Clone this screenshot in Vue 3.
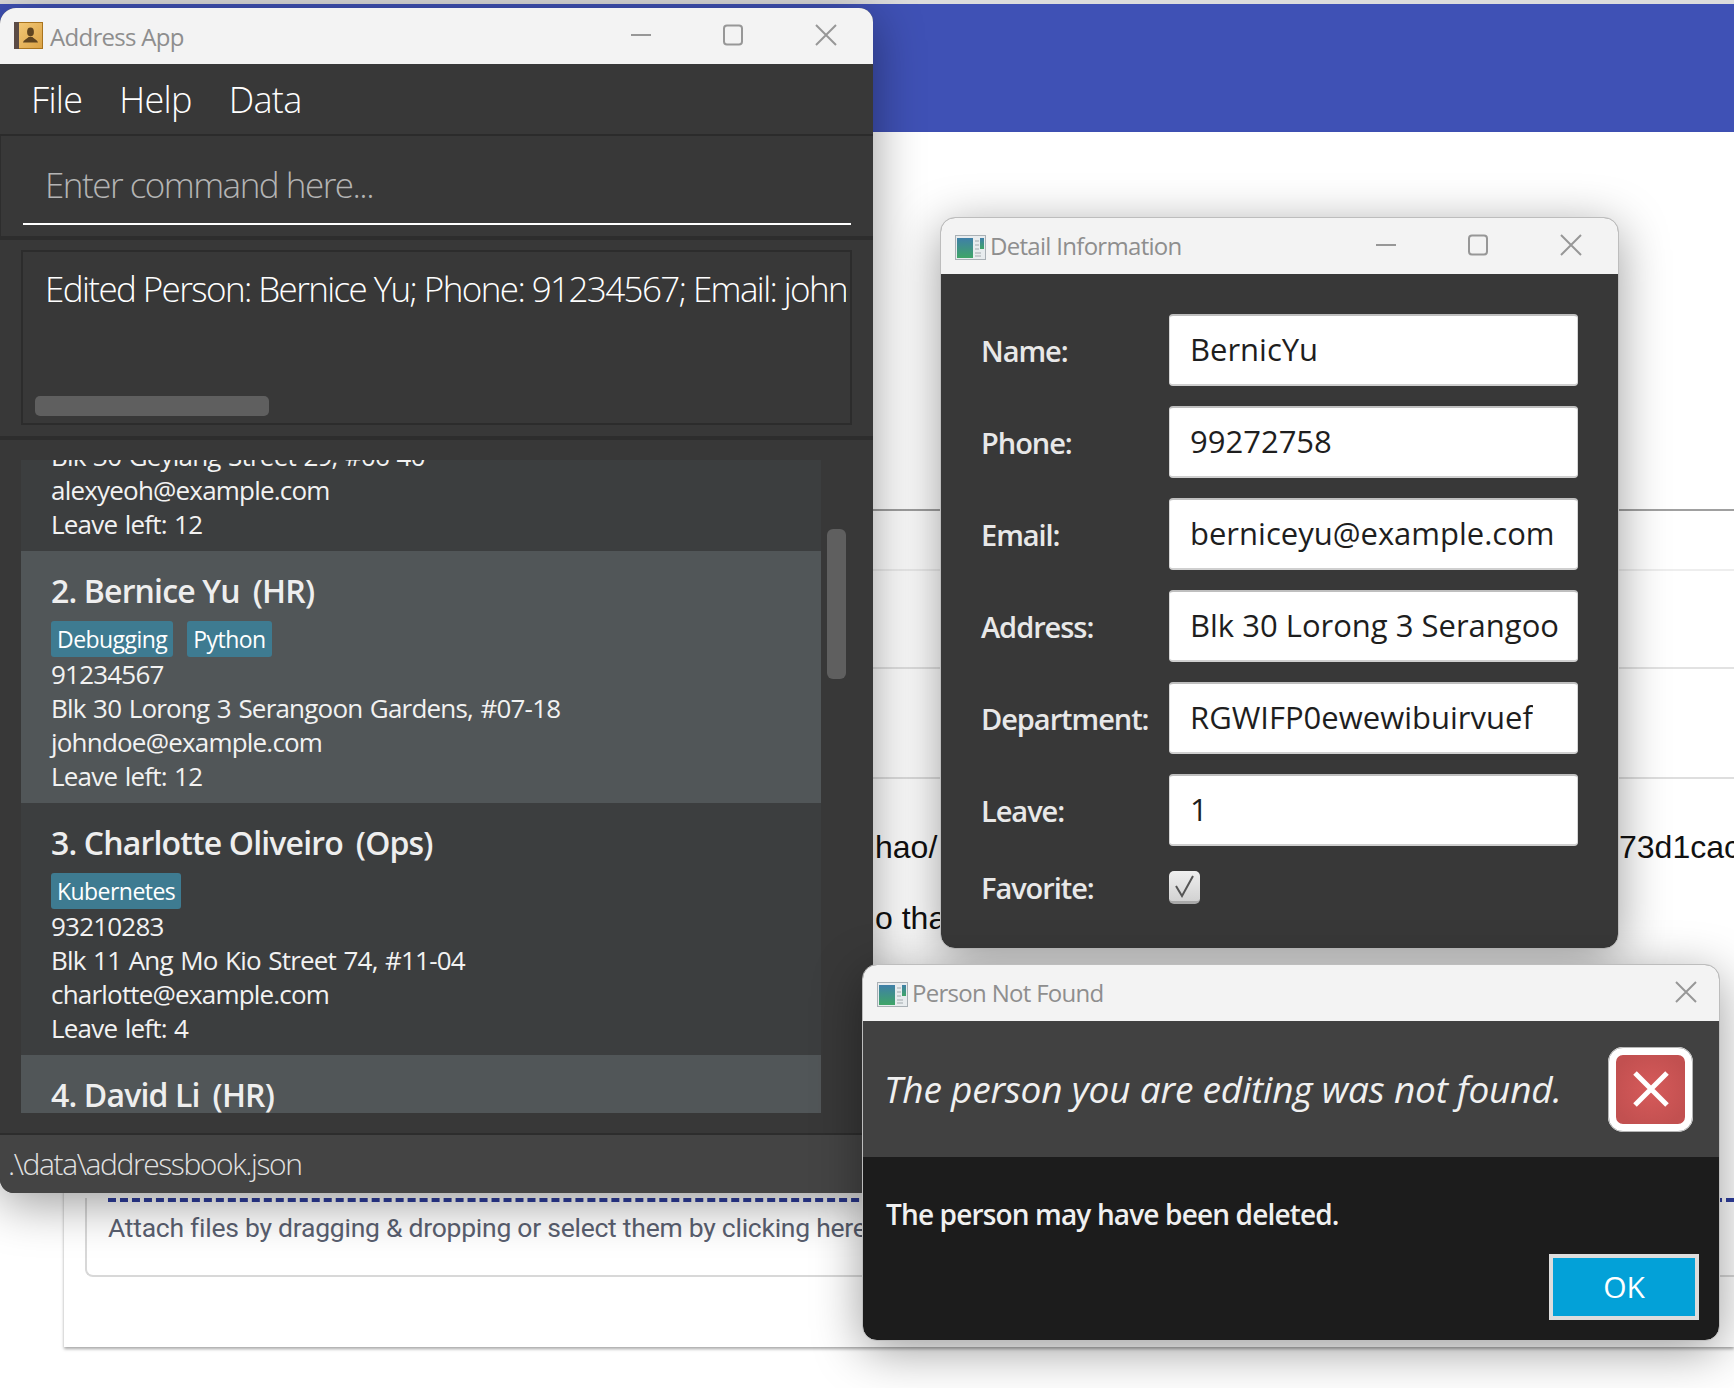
<script setup>
const persons = [
  { id: 1, name: 'Alex Yeoh', dept: 'Ops', tags: ['Java'], phone: '87438807', address: 'Blk 30 Geylang Street 29, #06-40', email: 'alexyeoh@example.com', leave: 12 },
  { id: 2, name: 'Bernice Yu', dept: 'HR', tags: ['Debugging', 'Python'], phone: '91234567', address: 'Blk 30 Lorong 3 Serangoon Gardens, #07-18', email: 'johndoe@example.com', leave: 12 },
  { id: 3, name: 'Charlotte Oliveiro', dept: 'Ops', tags: ['Kubernetes'], phone: '93210283', address: 'Blk 11 Ang Mo Kio Street 74, #11-04', email: 'charlotte@example.com', leave: 4 },
  { id: 4, name: 'David Li', dept: 'HR', tags: ['Docker'], phone: '91031282', address: 'Blk 436 Serangoon Gardens Street 26, #16-43', email: 'lidavid@example.com', leave: 9 }
]

const fields = [
  { label: 'Name:', value: 'BernicYu' },
  { label: 'Phone:', value: '99272758' },
  { label: 'Email:', value: 'berniceyu@example.com' },
  { label: 'Address:', value: 'Blk 30 Lorong 3 Serangoon Gardens, #07-18' },
  { label: 'Department:', value: 'RGWIFP0ewewibuirvuef' },
  { label: 'Leave:', value: '1' }
]
</script>

<template>
  <div class="desktop">
    <!-- browser page behind the windows -->
    <div class="page">
      <div class="page-top"></div>
      <div class="page-header"></div>
      <div class="card">
        <div class="rule rule-a"></div>
        <div class="rule rule-b"></div>
        <div class="rule rule-c"></div>
        <div class="rule rule-d"></div>
        <div class="text-line first">
          <span>hao/</span>
          <span class="tail">73d1cac1f2</span>
        </div>
        <div class="text-line second"><span>o tha</span></div>
        <div class="attach">
          <div class="attach-dash"></div>
          <div class="attach-text">Attach files by dragging &amp; dropping or select them by clicking here</div>
        </div>
      </div>
    </div>

    <!-- main window -->
    <section class="win main-win">
      <header class="bar">
        <svg class="book" width="29" height="27" viewBox="0 0 29 27">
          <defs>
            <linearGradient id="cover" x1="0" y1="0" x2="1" y2="1">
              <stop offset="0" stop-color="#f2c877" />
              <stop offset="1" stop-color="#dba244" />
            </linearGradient>
          </defs>
          <rect x="4" y="0.5" width="24.5" height="26" fill="url(#cover)" stroke="#a9741e" />
          <rect x="0" y="0" width="5" height="27" fill="#5b4b45" />
          <ellipse cx="16.5" cy="10" rx="3.4" ry="4.4" fill="#5f4420" />
          <path d="M9 20.5c.5-2.500 4-3.500 5.500-5.500h4c1.500 2 5 3 5.500 5.500z" fill="#5f4420" />
        </svg>
        <span class="bar-title">Address App</span>
        <div class="controls">
          <button class="ctl"><svg width="22" height="22" viewBox="0 0 22 22"><path d="M1 11h20" /></svg></button>
          <button class="ctl"><svg width="22" height="22" viewBox="0 0 22 22"><rect x="2" y="1.500" width="18" height="19" rx="3" /></svg></button>
          <button class="ctl ctl-close"><svg width="22" height="22" viewBox="0 0 22 22"><path d="M1 1l20 20M21 1L1 21" /></svg></button>
        </div>
      </header>

      <nav class="menu">
        <span>File</span>
        <span>Help</span>
        <span>Data</span>
      </nav>

      <div class="command-pane">
        <div class="command">Enter command here...</div>
      </div>

      <div class="result-pane">
        <div class="result">
          <div class="result-text">Edited Person: Bernice Yu; Phone: 91234567; Email: johndoe@example.com; Address: Blk 30 Lorong 3</div>
          <div class="hscroll"></div>
        </div>
      </div>

      <div class="list-pane">
        <div class="list">
          <div class="list-inner">
            <article v-for="p in persons" :key="p.id" class="person" :class="{ alt: p.id % 2 === 0 }">
              <h3 class="person-name"><span>{{ p.id }}. {{ p.name }}</span><span>({{ p.dept }})</span></h3>
              <div class="tags">
                <span v-for="t in p.tags" :key="t" class="tag">{{ t }}</span>
              </div>
              <div class="line">{{ p.phone }}</div>
              <div class="line">{{ p.address }}</div>
              <div class="line">{{ p.email }}</div>
              <div class="line">Leave left: {{ p.leave }}</div>
            </article>
          </div>
        </div>
        <div class="vscroll"></div>
      </div>

      <footer class="status">.\data\addressbook.json</footer>
    </section>

    <!-- detail window -->
    <section class="win detail-win">
      <header class="bar">
        <svg class="app-icon" width="31" height="25" viewBox="0 0 31 25">
          <defs>
            <linearGradient id="pane" x1="0" y1="0" x2="0" y2="1">
              <stop offset="0" stop-color="#3f7fa8" />
              <stop offset="1" stop-color="#3fa567" />
            </linearGradient>
          </defs>
          <rect x="0.500" y="0.500" width="30" height="24" fill="#e8ecee" stroke="#a9b0b5" />
          <rect x="2" y="3" width="16" height="20" fill="url(#pane)" />
          <path d="M20 6h4M20 10h4M20 14h4M20 18h6M20 21h6" stroke="#b9c0c4" stroke-width="1.500" />
          <rect x="25" y="3" width="4" height="11" fill="url(#pane)" />
        </svg>
        <span class="bar-title">Detail Information</span>
        <div class="controls">
          <button class="ctl"><svg width="22" height="22" viewBox="0 0 22 22"><path d="M1 11h20" /></svg></button>
          <button class="ctl"><svg width="22" height="22" viewBox="0 0 22 22"><rect x="2" y="1.500" width="18" height="19" rx="3" /></svg></button>
          <button class="ctl ctl-close"><svg width="22" height="22" viewBox="0 0 22 22"><path d="M1 1l20 20M21 1L1 21" /></svg></button>
        </div>
      </header>

      <form class="form" @submit.prevent>
        <template v-for="f in fields" :key="f.label">
          <label class="form-label">{{ f.label }}</label>
          <div class="field"><span class="field-text">{{ f.value }}</span></div>
        </template>
        <label class="form-label fav-label">Favorite:</label>
        <div class="fav">
          <div class="check">
            <svg width="23" height="27" viewBox="0 0 23 27"><path d="M3 13l6 10L20 3" /></svg>
          </div>
        </div>
      </form>
    </section>

    <!-- alert -->
    <section class="win alert-win">
      <header class="bar">
        <svg class="app-icon" width="31" height="25" viewBox="0 0 31 25">
          <rect x="0.500" y="0.500" width="30" height="24" fill="#e8ecee" stroke="#a9b0b5" />
          <rect x="2" y="3" width="16" height="20" fill="url(#pane)" />
          <path d="M20 6h4M20 10h4M20 14h4M20 18h6M20 21h6" stroke="#b9c0c4" stroke-width="1.500" />
          <rect x="25" y="3" width="4" height="11" fill="url(#pane)" />
        </svg>
        <span class="bar-title">Person Not Found</span>
        <div class="controls">
          <button class="ctl ctl-alert"><svg width="22" height="22" viewBox="0 0 22 22"><path d="M1 1l20 20M21 1L1 21" /></svg></button>
        </div>
      </header>
      <div class="alert-head">
        <div class="alert-msg">The person you are editing was not found.</div>
        <div class="alert-badge">
          <svg width="36" height="36" viewBox="0 0 36 36"><path d="M2 2l32 32M34 2L2 34" /></svg>
        </div>
      </div>
      <div class="alert-body">
        <div class="alert-detail">The person may have been deleted.</div>
        <div class="alert-actions">
          <button class="ok">OK</button>
        </div>
      </div>
    </section>
  </div>
</template>

<style>
html, body {
  margin: 0;
  overflow: hidden;
  background: #fff;
}
</style>

<style scoped>
.desktop {
  position: relative;
  width: 1734px;
  height: 1388px;
  overflow: hidden;
  background: #fff;
  font-family: "Open Sans", "Noto Sans", sans-serif;
}

.page {
  display: flex;
  flex-direction: column;
  height: 1347px;
}
.page-top {
  height: 4px;
  background: #dcdcdc;
}
.page-header {
  height: 128px;
  background: #3f51b5;
}
.card {
  flex: 1;
  margin-left: 64px;
  display: flex;
  flex-direction: column;
  box-shadow: 0 2px 3px rgba(0, 0, 0, 0.35);
  font-family: "Liberation Sans", Arial, sans-serif;
}
.rule { flex: none; }
.rule-a { height: 377px; border-bottom: 2px solid #a0a0a0; }
.rule-b { height: 58px; border-bottom: 2px solid #eee; }
.rule-c { height: 96px; border-bottom: 2px solid #e2e2e2; }
.rule-d { height: 108px; border-bottom: 2px solid #dedede; }

.text-line {
  display: flex;
  justify-content: space-between;
  padding-left: 811px;
  font-size: 32px;
  line-height: 40px;
  color: #111;
  white-space: nowrap;
}
.text-line.first { margin-top: 48px; margin-right: -64px; }
.text-line.first .tail { width: 179px; overflow: hidden; }
.text-line.second { margin-top: 31px; }

.attach {
  margin: 260px 0 0 21px;
  height: 77px;
  border: 2px solid #d8d8d8;
  border-top: 0;
  border-right: 0;
  border-bottom-left-radius: 8px;
}
.attach-dash {
  margin-left: 21px;
  border-top: 4px dashed #2f3e9e;
}
.attach-text {
  margin: 8px 0 0 21px;
  font-family: Roboto, sans-serif;
  font-size: 26.500px;
  line-height: 36px;
  color: #5a6070;
  white-space: nowrap;
  letter-spacing: -0.25px;
}

/* windows */
.win {
  position: absolute;
  display: flex;
  flex-direction: column;
  overflow: hidden;
  border-radius: 14px;
  background: #383838;
  box-shadow: 0 10px 50px rgba(0, 0, 0, 0.4);
}
.main-win {
  left: 0;
  top: 8px;
  width: 873px;
  height: 1185px;
  border-top-left-radius: 16px;
}
.detail-win {
  left: 941px;
  top: 218px;
  width: 677px;
  height: 730px;
  outline: 1px solid #bdbdbd;
}
.alert-win {
  left: 863px;
  top: 965px;
  width: 856px;
  height: 375px;
  outline: 1px solid #bdbdbd;
}

.bar {
  flex: none;
  display: flex;
  align-items: center;
  height: 56px;
  background: #f3f3f3;
  padding-left: 14px;
}
.book { margin-right: 7px; margin-top: -1px; }
.app-icon { margin-right: 4px; margin-top: 2px; }
.bar-title {
  font-size: 24px;
  color: #8e8e8e;
  letter-spacing: -0.7px;
}
.detail-win .bar-title, .alert-win .bar-title {
  margin-top: -2px;
}
.controls {
  margin-left: auto;
  display: flex;
}
.ctl {
  width: 92px;
  height: 56px;
  display: flex;
  align-items: center;
  justify-content: center;
  padding: 0;
  border: 0;
  background: none;
}
.ctl svg {
  fill: none;
  stroke: #979797;
  stroke-width: 2;
  margin-top: -2px;
}
.ctl-close { width: 94px; }
.ctl-alert { width: 66px; }

.menu {
  flex: none;
  display: flex;
  gap: 37px;
  align-items: center;
  height: 70px;
  padding-left: 31px;
  font-size: 36px;
  font-weight: 300;
  color: #fff;
  border-bottom: 2px solid #2b2b2b;
  letter-spacing: -0.7px;
}

.command-pane {
  flex: none;
  height: 104px;
  padding: 0 22px;
  box-sizing: border-box;
  border-bottom: 4px solid #2d2d2d;
  border-left: 1px solid #2d2d2d;
}
.command {
  height: 89px;
  box-sizing: border-box;
  padding: 24px 0 0 22px;
  border-bottom: 2px solid #fff;
  font-size: 35px;
  line-height: 50px;
  font-weight: 300;
  letter-spacing: -1.5px;
  color: #b4b4b4;
}

.result-pane {
  flex: none;
  height: 200px;
  padding: 10px 21px 11px;
  box-sizing: border-box;
  border-bottom: 4px solid #2d2d2d;
}
.result {
  height: 100%;
  box-sizing: border-box;
  border: 2px solid #2c2c2c;
  position: relative;
  overflow: hidden;
  padding: 12px 4px 0 22px;
}
.result-text {
  font-size: 35px;
  line-height: 50px;
  font-weight: 300;
  letter-spacing: -1.6px;
  color: #fff;
  white-space: nowrap;
  overflow: hidden;
}
.hscroll {
  position: absolute;
  left: 12px;
  bottom: 7px;
  width: 234px;
  height: 20px;
  border-radius: 5px;
  background: #5f5f5f;
}

.list-pane {
  flex: 1;
  min-height: 0;
  display: flex;
  padding: 20px 26px 20px 21px;
}
.list {
  width: 800px;
  overflow: hidden;
}
.list-inner {
  margin-top: -161px;
}
.person {
  height: 252px;
  box-sizing: border-box;
  padding: 19px 30px 0;
  background: #3c3e3f;
  color: #f0f0f0;
}
.person.alt {
  background: #515658;
}
.person-name {
  margin: 0;
  display: flex;
  gap: 13px;
  font-size: 32px;
  line-height: 41px;
  font-weight: 600;
  letter-spacing: -0.85px;
  color: #eee;
}
.tags {
  display: flex;
  gap: 14px;
  margin: 10px 0 0;
  height: 36px;
}
.tag {
  padding: 0 6px;
  line-height: 36px;
  border-radius: 3px;
  background: #3e7b91;
  color: #fff;
  font-size: 23px;
  letter-spacing: -0.55px;
}
.line {
  font-size: 26px;
  line-height: 34px;
  letter-spacing: -0.8px;
  word-spacing: 1.500px;
  color: #f2f2f2;
  white-space: nowrap;
}
.vscroll {
  width: 19px;
  height: 150px;
  margin: 69px 0 0 6px;
  border-radius: 6px;
  background: #5f5f5f;
  flex: none;
}

.status {
  flex: none;
  height: 60px;
  line-height: 58px;
  padding-left: 8px;
  background: #444;
  border-top: 2px solid #2d2d2d;
  box-sizing: border-box;
  font-size: 30px;
  font-weight: 300;
  letter-spacing: -1.4px;
  color: #e2e2e2;
}

/* detail form */
.form {
  flex: 1;
  display: grid;
  grid-template-columns: 188px 409px;
  grid-auto-rows: 72px;
  row-gap: 20px;
  align-items: center;
  padding: 40px 0 0 40px;
  background: #383838;
}
.form-label {
  font-size: 29px;
  font-weight: 600;
  color: #e8e8e8;
  letter-spacing: -1.05px;
}
.field {
  height: 72px;
  box-sizing: border-box;
  display: flex;
  align-items: center;
  overflow: hidden;
  padding: 0 16px 0 20px;
  background: #fff;
  border-radius: 4px;
  border: 1px solid #d6d6d6;
  border-top: 2px solid #bfbfbf;
  border-bottom: 2px solid #cfcfcf;
}
.field-text {
  font-size: 31px;
  font-weight: 500;
  color: #1e1e1e;
  white-space: nowrap;
  overflow: hidden;
  margin-top: -2px;
}
.fav-label, .fav {
  margin-top: -29px;
}
.check {
  width: 31px;
  height: 33px;
  box-sizing: border-box;
  display: flex;
  align-items: center;
  justify-content: center;
  border-radius: 5px;
  background: linear-gradient(#efefef, #d2d2d2);
  border-bottom: 3px solid #a9a9a9;
}
.check svg {
  fill: none;
  stroke: #555;
  stroke-width: 2;
}

/* alert */
.alert-head {
  flex: none;
  height: 136px;
  display: flex;
  align-items: center;
  justify-content: space-between;
  padding: 0 26px 0 21px;
  background: #414141;
}
.alert-msg {
  font-size: 37px;
  font-style: italic;
  font-weight: 500;
  color: #f0f0f0;
  white-space: nowrap;
  letter-spacing: -0.2px;
  margin-top: -2px;
}
.alert-badge {
  width: 85px;
  height: 85px;
  box-sizing: border-box;
  display: flex;
  align-items: center;
  justify-content: center;
  border: 8px solid #fff;
  outline: 1px solid #b5b5b5;
  outline-offset: -1px;
  border-radius: 15px;
  background: radial-gradient(circle, #d65a5a 0%, #c25050 80%);
}
.alert-badge svg {
  fill: none;
  stroke: #fff;
  stroke-width: 5;
}
.alert-body {
  flex: 1;
  display: flex;
  flex-direction: column;
  background: #1c1c1c;
  padding: 37px 20px 20px 23px;
}
.alert-detail {
  font-size: 28px;
  line-height: 40px;
  font-weight: 600;
  color: #f0f0f0;
  letter-spacing: -0.85px;
}
.alert-actions {
  margin-top: auto;
  display: flex;
  justify-content: flex-end;
}
.ok {
  width: 150px;
  height: 66px;
  box-sizing: border-box;
  border: 4px solid #ddd;
  background: #03a1d8;
  color: #fff;
  font: 400 30px "Open Sans", sans-serif;
  padding-bottom: 2px;
}
</style>
